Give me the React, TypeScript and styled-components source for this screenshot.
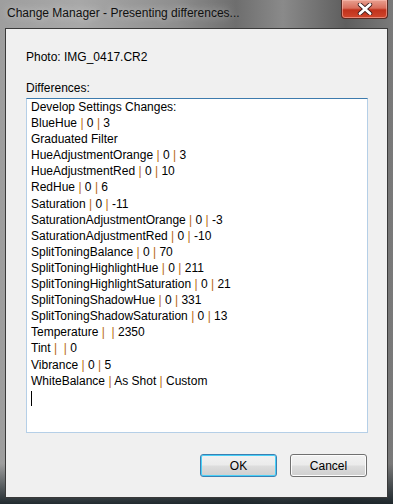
import React from 'react';
import styled, { createGlobalStyle } from 'styled-components';

const lines: string[][] = [
  ['Develop Settings Changes:'],
  ['BlueHue', '0', '3'],
  ['Graduated Filter'],
  ['HueAdjustmentOrange', '0', '3'],
  ['HueAdjustmentRed', '0', '10'],
  ['RedHue', '0', '6'],
  ['Saturation', '0', '-11'],
  ['SaturationAdjustmentOrange', '0', '-3'],
  ['SaturationAdjustmentRed', '0', '-10'],
  ['SplitToningBalance', '0', '70'],
  ['SplitToningHighlightHue', '0', '211'],
  ['SplitToningHighlightSaturation', '0', '21'],
  ['SplitToningShadowHue', '0', '331'],
  ['SplitToningShadowSaturation', '0', '13'],
  ['Temperature', '', '2350'],
  ['Tint', '', '0'],
  ['Vibrance', '0', '5'],
  ['WhiteBalance', 'As Shot', 'Custom'],
];

const GlobalStyle = createGlobalStyle`
  html, body {
    margin: 0;
    padding: 0;
    background: #2b2b2b;
  }
  body {
    font-family: "Segoe UI", "Liberation Sans", Arial, sans-serif;
    font-size: 12px;
  }
`;

const App = () => {
  return (
    <>
      <GlobalStyle />
      <Window>
        <TitleBar>
          <Title>Change Manager - Presenting differences...</Title>
          <CloseButton>
            <svg width="16" height="12" viewBox="0 0 16 12">
              <path d="M3 1.5 L13 10.5 M13 1.5 L3 10.5" stroke="#3a1a1a" strokeWidth="4.4" strokeLinecap="round" />
              <path d="M3 1.5 L13 10.5 M13 1.5 L3 10.5" stroke="#ffffff" strokeWidth="2.8" strokeLinecap="round" />
            </svg>
          </CloseButton>
        </TitleBar>
        <Client>
          <Label>Photo: IMG_0417.CR2</Label>
          <DiffLabel>Differences:</DiffLabel>
          <TextBox>
            {lines.map((parts, i) => (
              <Line key={i}>
                {parts.map((p, j) => (
                  <React.Fragment key={j}>
                    {j > 0 && <> <Sep>|</Sep> </>}
                    {p}
                  </React.Fragment>
                ))}
              </Line>
            ))}
            <Line><Caret /></Line>
          </TextBox>
          <Buttons>
            <Button $focused>OK</Button>
            <Button>Cancel</Button>
          </Buttons>
        </Client>
      </Window>
    </>
  );
};

const Window = styled.div`
  width: 393px;
  height: 504px;
  box-sizing: border-box;
  padding: 0 5px 6px 5px;
  display: flex;
  flex-direction: column;
  background:
    linear-gradient(180deg, rgba(150, 150, 150, 0) 0%, rgba(150, 150, 150, 0) 92%, rgba(20, 30, 35, 0.9) 100%),
    linear-gradient(90deg, #9e9e9e 0%, #a8a8a8 20%, #8e8e8e 45%, #6e6e6e 60%, #8a8a8a 72%, #5e5e5e 88%, #7a7a7a 100%);
`;

const TitleBar = styled.div`
  height: 28px;
  display: flex;
  align-items: flex-start;
  justify-content: space-between;
  flex-shrink: 0;
`;

const Title = styled.div`
  margin: 6px 0 0 2px;
  color: #101010;
  text-shadow: 0 0 8px rgba(255, 255, 255, 0.6);
  white-space: nowrap;
`;

const CloseButton = styled.div`
  width: 45px;
  height: 18px;
  border: 1px solid #5a2a22;
  border-top: none;
  border-radius: 0 0 4px 4px;
  background: linear-gradient(180deg, #e8a090 0%, #d86e5c 45%, #c0321c 55%, #d0462c 100%);
  box-shadow: inset 0 0 0 1px rgba(255, 200, 190, 0.5);
  display: flex;
  align-items: center;
  justify-content: center;
`;

const Client = styled.div`
  flex: 1;
  background: #f0f0f0;
  border: 1px solid #3a3a3a;
  box-sizing: border-box;
  padding: 20px 19px 0 20px;
  display: flex;
  flex-direction: column;
`;

const Label = styled.div`
  color: #000;
  line-height: 16px;
`;

const DiffLabel = styled(Label)`
  margin-top: 15px;
`;

const TextBox = styled.div`
  margin-top: 2px;
  height: 335px;
  box-sizing: border-box;
  background: #fff;
  border: 1px solid #b5cfe7;
  border-top-color: #3d7bad;
  padding: 0 4px;
`;

const Line = styled.div`
  height: 16.1px;
  line-height: 16px;
  white-space: pre;
  color: #000;
  position: relative;
`;

const Sep = styled.span`
  color: #b86a14;
`;

const Caret = styled.span`
  position: absolute;
  left: 0;
  top: 2px;
  width: 1px;
  height: 15px;
  background: #000;
`;

const Buttons = styled.div`
  display: flex;
  justify-content: flex-end;
  gap: 13px;
  margin-top: 21px;
  padding-right: 1px;
`;

const Button = styled.div<{ $focused?: boolean }>`
  width: 77px;
  height: 23px;
  box-sizing: border-box;
  border: 1px solid ${p => (p.$focused ? '#3c7fb1' : '#707070')};
  border-radius: 3px;
  background: linear-gradient(180deg, #f2f2f2 0%, #ebebeb 48%, #dddddd 52%, #cfcfcf 100%);
  box-shadow: ${p => (p.$focused ? 'inset 0 0 0 1px #48d0f8' : 'inset 0 0 0 1px #fcfcfc')};
  display: flex;
  align-items: center;
  justify-content: center;
  color: #000;
`;

export default App;
